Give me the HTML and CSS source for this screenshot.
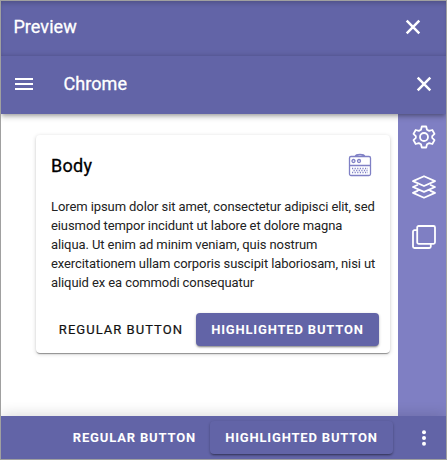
FILE: index.html
```html
<!DOCTYPE html>
<html lang="en">
<head>
<meta charset="utf-8">
<title>Preview</title>
<link rel="stylesheet" href="styles.css">
</head>
<body>
<div class="window">
  <header class="bar preview-bar">
    <h1 class="title">Preview</h1>
    <svg class="close" viewBox="0 0 24 24"><path d="M5.700 5.700 18.300 18.300M18.300 5.700 5.700 18.300"/></svg>
  </header>
  <header class="bar chrome-bar">
    <svg class="menu" viewBox="0 0 18 12"><path d="M0 1h18M0 6h18M0 11h18"/></svg>
    <h2 class="title">Chrome</h2>
    <svg class="close" viewBox="0 0 24 24"><path d="M5.700 5.700 18.300 18.300M18.300 5.700 5.700 18.300"/></svg>
  </header>
  <div class="main">
    <main class="content">
      <section class="card">
        <div class="card-head">
          <h3 class="title">Body</h3>
          <svg class="radio" viewBox="0 0 24 24">
            <path d="M7 3.500C8 .8 16 .8 17 3.500M3 3.500h18a1.500 1.500 0 0 1 1.500 1.500v16a1.500 1.500 0 0 1-1.500 1.500H3A1.500 1.500 0 0 1 1.500 21V5A1.500 1.500 0 0 1 3 3.500zM1.500 12.500h21"/>
            <circle cx="5.500" cy="8" r="1.500"/><circle cx="11" cy="8" r="1.500"/>
            <path class="grille" d="M4 15.500h16M5.500 17.500h14M4 19.500h16"/>
          </svg>
        </div>
        <p class="copy">Lorem ipsum dolor sit amet, consectetur adipisci elit, sed eiusmod tempor incidunt ut labore et dolore magna aliqua. Ut enim ad minim veniam, quis nostrum exercitationem ullam corporis suscipit laboriosam, nisi ut aliquid ex ea commodi consequatur</p>
        <div class="actions">
          <button class="btn">REGULAR BUTTON</button>
          <button class="btn highlighted">HIGHLIGHTED BUTTON</button>
        </div>
      </section>
    </main>
    <aside class="side">
      <svg viewBox="0 0 24 24"><path d="M9.800 1.500h4.400l.8 3.200 2.200 1.200 3.100-.9 2.200 3.900-2.300 2.200v1.800l2.300 2.200-2.200 3.900-3.100-.9-2.200 1.200-.8 3.200H9.800L9 19.300l-2.200-1.200-3.100.9-2.200-3.900 2.300-2.200v-1.800L1.500 8.900 3.700 5l3.100.9L9 4.700z"/><circle cx="12" cy="12" r="4"/></svg>
      <svg viewBox="0 0 24 24"><path d="m12 1.200 11 4.900L12 11 1 6.100zM6 9.700 1 12l11 4.900L23 12l-5-2.300M6 15.600l-5 2.300 11 4.900 11-4.900-5-2.300"/></svg>
      <svg viewBox="0 0 24 24"><rect x="5.200" y="1" width="17.800" height="17.800" rx="1.500"/><path d="M5.200 5.200H2.500A1.500 1.500 0 0 0 1 6.700v14.800A1.500 1.500 0 0 0 2.500 23h14.800a1.500 1.500 0 0 0 1.500-1.500v-2.700"/></svg>
    </aside>
  </div>
  <footer class="bar footer-bar">
    <button class="btn inverse">REGULAR BUTTON</button>
    <button class="btn highlighted">HIGHLIGHTED BUTTON</button>
    <svg class="more" viewBox="0 0 4 16"><circle cx="2" cy="2.300" r="2"/><circle cx="2" cy="8" r="2"/><circle cx="2" cy="13.700" r="2"/></svg>
  </footer>
</div>
</body>
</html>
```
FILE: styles.css
```css
* { box-sizing: border-box; }
body { margin: 0; font-family: Roboto, sans-serif; }
.window {
  width: 447px;
  height: 460px;
  display: flex;
  flex-direction: column;
  border: 1px solid #a0a0a0;
  background: #fff;
  overflow: hidden;
}
.bar {
  display: flex;
  align-items: center;
  flex: none;
  background: #6264a7;
  color: #fff;
}
.title { margin: 0; font-size: 18px; font-weight: 400; line-height: 24px; -webkit-text-stroke: 0.3px; }
.bar .title { flex: 1; letter-spacing: .08px; }
.preview-bar {
  height: 55px;
  padding: 0 21px 3px 12.400px;
  box-shadow: inset 0 4px 5px -2px rgba(0, 0, 0, .2), inset 0 -5px 5px -4px rgba(0, 0, 0, .12);
}
.chrome-bar {
  position: relative;
  height: 58px;
  padding: 0 10px 3px 14px;
  box-shadow: 0 2px 4px -1px rgba(0, 0, 0, .3), 0 4px 5px rgba(0, 0, 0, .14);
}
.close { width: 24px; height: 24px; fill: none; stroke: #fff; stroke-width: 2.5; }
.menu { width: 18px; height: 12px; margin: 1px 30.400px 0 0; stroke: #fff; stroke-width: 2; }
.main { display: flex; height: 302px; }
.content { flex: 1; min-width: 0; padding: 21px 8px 0 35px; }
.card {
  height: 218px;
  padding: 15px 11px 0 15px;
  border-radius: 4px;
  box-shadow: 0 2px 1px -1px rgba(0, 0, 0, .25), 0 1px 1px rgba(0, 0, 0, .16), 0 1px 4px rgba(0, 0, 0, .18);
}
.card-head { display: flex; justify-content: space-between; height: 32px; padding: 3px 7.500px 0 0; }
.card .title { color: #000; margin-top: 1px; letter-spacing: .3px; }
.radio { width: 24px; height: 24px; fill: none; stroke: #7f80c5; stroke-width: 1.3; }
.grille { stroke-dasharray: 1.2 1.4; }
.copy { margin: 15px 0 0; height: 95px; font-size: 13px; line-height: 19px; letter-spacing: -.09px; color: #222; }
.actions { display: flex; justify-content: flex-end; margin-top: 21px; }
.btn {
  flex: none;
  height: 33px;
  padding: 0 13px 0 15px;
  border: 0;
  border-radius: 4px;
  background: none;
  color: #111;
  font: 400 13px Roboto, sans-serif;
  letter-spacing: 1.03px;
  white-space: nowrap;
  -webkit-text-stroke: 0.2px;
}
.highlighted {
  width: 183px;
  padding: 0;
  background: #6264a7;
  color: #fff;
  font-weight: 700;
  letter-spacing: .83px;
  -webkit-text-stroke: 0;
  box-shadow: 0 2px 2px -1px rgba(0, 0, 0, .35), 0 1px 3px rgba(0, 0, 0, .24);
}
.inverse { padding-right: 14px; color: #fff; font-weight: 700; letter-spacing: .83px; -webkit-text-stroke: 0; }
.side {
  flex: none;
  width: 48px;
  display: flex;
  flex-direction: column;
  align-items: center;
  gap: 26px;
  padding: 11px 0 0 4px;
  background: #7f7fc3;
}
.side svg { width: 24px; height: 24px; fill: none; stroke: #fff; stroke-width: 1.8; stroke-linejoin: round; }
.footer-bar {
  position: relative;
  height: 43px;
  justify-content: flex-end;
  padding-right: 20px;
  box-shadow: 0 -2px 14px rgba(0, 0, 0, .14);
}
.more { width: 4px; height: 16px; margin-left: 29px; fill: #fff; }
```
